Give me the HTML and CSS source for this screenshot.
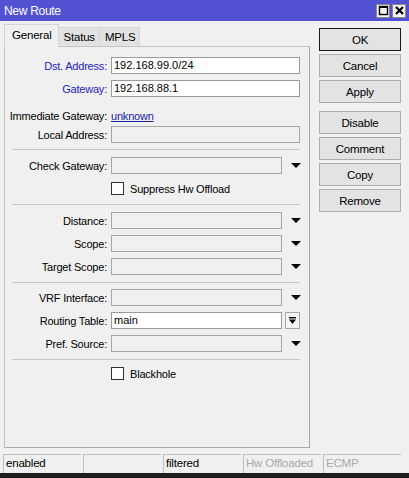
FILE: index.html
```html
<!DOCTYPE html>
<html lang="en">
<head>
<meta charset="utf-8">
<title>New Route</title>
<link rel="stylesheet" href="styles.css">
</head>
<body>
<div class="window">
  <div class="titlebar">
    <span class="title">New Route</span>
    <div class="wbtns">
      <span class="wbtn"><svg width="11" height="11" viewBox="0 0 11 11"><rect x="1.5" y="1.5" width="8" height="8" fill="none" stroke="#000" stroke-width="1.4"/><line x1="1" y1="2" x2="10" y2="2" stroke="#000" stroke-width="2"/></svg></span>
      <span class="wbtn"><svg width="11" height="11" viewBox="0 0 11 11"><path d="M2 2 L9 9 M9 2 L2 9" stroke="#000" stroke-width="2.2"/></svg></span>
    </div>
  </div>

  <div class="content">
    <div class="main">
      <div class="tabs">
        <span class="tab active">General</span>
        <span class="tab">Status</span>
        <span class="tab">MPLS</span>
      </div>
      <div class="panel">
        <div class="row"><label class="lbl req">Dst. Address:</label><div class="field filled">192.168.99.0/24</div></div>
        <div class="row"><label class="lbl req">Gateway:</label><div class="field filled">192.168.88.1</div></div>
        <div class="row row-text"><label class="lbl">Immediate Gateway:</label><a class="link">unknown</a></div>
        <div class="row"><label class="lbl">Local Address:</label><div class="field"></div></div>
        <div class="sep sep-a"></div>
        <div class="row"><label class="lbl">Check Gateway:</label><div class="field short"></div><span class="arrow"></span></div>
        <div class="row"><span class="lbl"></span><span class="check"></span><span class="cbtext">Suppress Hw Offload</span></div>
        <div class="sep sep-b"></div>
        <div class="row"><label class="lbl">Distance:</label><div class="field short"></div><span class="arrow"></span></div>
        <div class="row"><label class="lbl">Scope:</label><div class="field short"></div><span class="arrow"></span></div>
        <div class="row"><label class="lbl">Target Scope:</label><div class="field short"></div><span class="arrow"></span></div>
        <div class="sep sep-c"></div>
        <div class="row"><label class="lbl">VRF Interface:</label><div class="field short"></div><span class="arrow"></span></div>
        <div class="row"><label class="lbl">Routing Table:</label><div class="field short filled">main</div>
          <span class="dropbtn"><svg width="9" height="9" viewBox="0 0 9 9"><rect x="1" y="1" width="7" height="1.4" fill="#000"/><path d="M1 3.6 H8 L4.5 8 Z" fill="#000"/></svg></span>
        </div>
        <div class="row"><label class="lbl">Pref. Source:</label><div class="field short"></div><span class="arrow"></span></div>
        <div class="sep sep-d"></div>
        <div class="row"><span class="lbl"></span><span class="check"></span><span class="cbtext">Blackhole</span></div>
      </div>
    </div>

    <div class="buttons">
      <button class="btn default">OK</button>
      <button class="btn">Cancel</button>
      <button class="btn">Apply</button>
      <button class="btn gap">Disable</button>
      <button class="btn">Comment</button>
      <button class="btn">Copy</button>
      <button class="btn">Remove</button>
    </div>
  </div>

  <div class="statusbar">
    <span class="cell">enabled</span>
    <span class="cell"></span>
    <span class="cell">filtered</span>
    <span class="cell dim">Hw Offloaded</span>
    <span class="cell dim">ECMP</span>
  </div>
  <div class="under"></div>
</div>
</body>
</html>
```

FILE: styles.css
```css
html, body {
  margin: 0;
  padding: 0;
  background: #1e1e1e;
}

.window {
  width: 409px;
  height: 478px;
  display: flex;
  flex-direction: column;
  background: #f0f0f0;
  font-family: "Liberation Sans", Arial, sans-serif;
  font-size: 11px;
  letter-spacing: -0.2px;
  color: #000;
  overflow: hidden;
}

/* caption bar */
.titlebar {
  height: 21px;
  flex: none;
  background: #5151d1;
  display: flex;
  align-items: center;
  justify-content: space-between;
  padding: 0 3px 0 4px;
}
.title {
  color: #fff;
  font-size: 12px;
  letter-spacing: -0.3px;
}
.wbtns {
  display: flex;
  gap: 2px;
}
.wbtn {
  width: 14px;
  height: 14px;
  box-sizing: border-box;
  border: 1px solid #8a8a8a;
  background: #f2f2f2;
  display: flex;
  align-items: center;
  justify-content: center;
}

/* body: tab area + button column */
.content {
  flex: 1;
  display: flex;
  padding: 3px 0 0 4px;
}
.main {
  width: 306px;
  display: flex;
  flex-direction: column;
}

.tabs {
  display: flex;
  align-items: flex-end;
  height: 22px;
  flex: none;
}
.tab {
  height: 19px;
  box-sizing: border-box;
  padding: 0 4px 0 5px;
  border: 1px solid #d4d4d4;
  border-bottom: none;
  border-left: none;
  background: #e2e2e2;
  display: flex;
  align-items: center;
  font-size: 11.5px;
}
.tab.active {
  height: 23px;
  margin-bottom: -1px;
  position: relative;
  z-index: 1;
  background: #f0f0f0;
  border-left: 1px solid #d4d4d4;
  padding: 0 6px 2px 7px;
}

.panel {
  flex: 1;
  border: 1px solid #c4c4c4;
  border-right-color: #a8a8a8;
  border-bottom-color: #a8a8a8;
  padding: 10px 0 0 0;
  display: flex;
  flex-direction: column;
  gap: 6px;
}

.row {
  display: flex;
  align-items: center;
  height: 17px;
}
.row-text {
  padding-top: 4px;
  margin-bottom: -4px;
}
.lbl {
  width: 102px;
  flex: none;
  text-align: right;
  padding-right: 4px;
  white-space: nowrap;
}
.lbl.req {
  color: #2424c0;
}
.link {
  color: #1a1aa8;
  text-decoration: underline;
}

.field {
  width: 189px;
  height: 17px;
  box-sizing: border-box;
  border: 1px solid #a6a6a6;
  background: #f0f0f0;
  padding: 0 2px;
  line-height: 15px;
  white-space: nowrap;
  letter-spacing: 0;
}
.field.filled {
  background: #fff;
  border-color: #9a9a9a;
}
.field.short {
  width: 171px;
}

.arrow {
  width: 0;
  height: 0;
  margin-left: 9px;
  border-left: 5px solid transparent;
  border-right: 5px solid transparent;
  border-top: 5px solid #000;
}
.dropbtn {
  width: 15px;
  height: 17px;
  box-sizing: border-box;
  margin-left: 3px;
  border: 1px solid #a6a6a6;
  background: #f4f4f4;
  display: flex;
  align-items: center;
  justify-content: center;
}

.check {
  width: 11px;
  height: 11px;
  border: 1px solid #333;
  background: #fff;
  flex: none;
}
.cbtext {
  margin-left: 6px;
}

.sep {
  height: 1px;
  margin-left: 7px;
  margin-right: 9px;
  background: #c8c8c8;
}
.sep-a { margin-top: 0; margin-bottom: 1px; }
.sep-b { margin-top: 1px; margin-bottom: 1px; }
.sep-c { margin-top: 1px; margin-bottom: 0; }
.sep-d { margin-top: 1px; margin-bottom: -1px; }

/* command buttons */
.buttons {
  display: flex;
  flex-direction: column;
  gap: 3px;
  margin-left: 9px;
  padding-top: 4px;
  width: 82px;
}
.btn {
  height: 23px;
  box-sizing: border-box;
  border: 1px solid #adadad;
  background: #e3e3e3;
  font-family: inherit;
  font-size: 11.5px;
  letter-spacing: -0.2px;
  color: #000;
  padding: 0;
}
.btn.default {
  border: 1px solid #1a1a1a;
}
.btn.gap {
  margin-top: 5px;
}

/* status strip */
.statusbar {
  height: 22px;
  flex: none;
  display: flex;
  gap: 2px;
  padding: 3px 0 0 3px;
  box-sizing: border-box;
  margin-top: 3px;
}
.cell {
  width: 78px;
  box-sizing: border-box;
  border-top: 1px solid #c0c0c0;
  border-left: 1px solid #c0c0c0;
  padding: 2px 0 0 2px;
  font-size: 11.5px;
}
.cell.dim {
  color: #a8a8a8;
}

.under {
  height: 5px;
  flex: none;
  background: #1e1e1e;
}
```
